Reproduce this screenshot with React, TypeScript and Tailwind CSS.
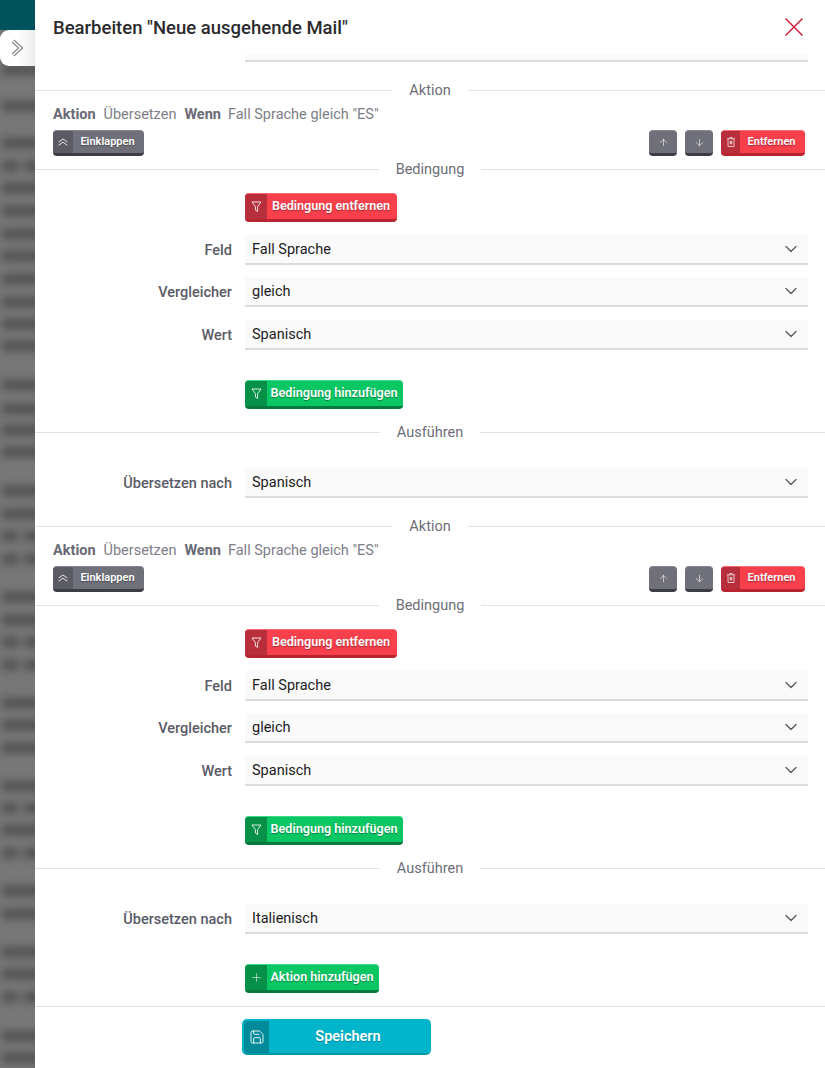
import { ChevronDown, ArrowUp, ArrowDown, Plus, Save } from 'lucide-react'
import type { ReactNode } from 'react'

const font = "font-['Roboto','Noto_Sans',sans-serif]"

// blurred lines of the page behind the drawer: [y, split row]
const backdropRows: [number, boolean][] = [
  [70, false], [106, false], [143, false], [166, true], [188, false], [211, false], [234, false],
  [256, false], [279, false], [302, false], [324, false], [346, false], [385, false],
  [409, false], [430, false], [452, false], [491, false], [514, false], [536, true],
  [559, true], [597, false], [620, false], [642, true], [665, true], [703, false],
  [725, false], [748, false], [786, false], [808, true], [830, false], [853, true],
  [891, false], [914, false], [952, false], [974, false], [997, true], [1036, false],
  [1058, false],
]

const FunnelIcon = () => (
  <svg width="11" height="12" viewBox="0 0 11 12" fill="none" stroke="currentColor" strokeWidth="1">
    <path d="M1 1h9L6.6 5.6V10.5L4.4 9V5.6Z" />
  </svg>
)

const ChevronsIcon = () => (
  <svg width="10" height="8" viewBox="0 0 10 8" fill="none" stroke="currentColor" strokeWidth="1">
    <path d="M.7 4 5 1l4.3 3M.7 7.2 5 4.2l4.3 3" />
  </svg>
)

const TrashIcon = () => (
  <svg width="8" height="10" viewBox="0 0 8 10" fill="none" stroke="currentColor" strokeWidth="1" opacity="0.8">
    <path d="M0 1.8h8M2.7 1.8V.5h2.6v1.3M1 1.8v7.7h6V1.8" />
    <path d="M2.7 4h2.6v3.3H2.7z" fill="currentColor" stroke="none" />
  </svg>
)

function Divider({ label, mt }: { label: string; mt: string }) {
  return (
    <div className={`flex h-[20px] items-center ${mt}`}>
      <div className="h-px flex-1 bg-[#e3e3e3]" />
      <span className="h-[20px] px-[17px] text-[14.5px] leading-[21px] text-[#6d6e78]">{label}</span>
      <div className="h-px flex-1 bg-[#e3e3e3]" />
    </div>
  )
}

function Select({ value, label, mt }: { value: string; label: string; mt: string }) {
  return (
    <div className={`flex items-center ${mt}`}>
      <label className="w-[197px] pt-px text-right text-[14.5px] font-medium text-[#5a5b66]">{label}</label>
      <div className="ml-[13px] flex h-[30px] w-[563px] items-center justify-between border-b-2 border-[#dcdcdc] bg-[#fafafa] pl-[7px] pr-[7px]">
        <span className="pt-px text-[14.5px] text-[#1c1c1c]">{value}</span>
        <ChevronDown size={20} strokeWidth={1.5} className="text-[#55565f]" />
      </div>
    </div>
  )
}

type Tone = 'gray' | 'red' | 'green'

const tones: Record<Tone, { body: string; tab: string }> = {
  gray: { body: 'bg-[#6f707a] border-t-[#85868f] border-b-[#3d3e45]', tab: 'bg-[#5a5b64]' },
  red: { body: 'bg-[#f8404d] border-t-[#f96a74] border-b-[#b7232e]', tab: 'bg-[#b72f3a]' },
  green: { body: 'bg-[#0ac663] border-t-[#3bd886] border-b-[#067a3d]', tab: 'bg-[#079148]' },
}

function Btn({ tone, icon, children, h, w, tabW }: { tone: Tone; icon: ReactNode; children?: ReactNode; h: string; w: string; tabW: string }) {
  const t = tones[tone]
  return (
    <button className={`flex items-stretch overflow-hidden rounded-[4px] border-t border-b-[3px] ${t.body} ${h} ${w}`}>
      <span className={`flex shrink-0 items-center justify-center text-white/85 ${tabW}`}>
        <span className={`flex h-full w-full items-center justify-center ${children ? t.tab : ''}`}>{icon}</span>
      </span>
      {children && (
        <span className="flex flex-1 items-center justify-center whitespace-nowrap pr-[2px] text-white [text-shadow:0_1px_1px_rgba(0,0,0,0.35)]">
          {children}
        </span>
      )}
    </button>
  )
}

function ActionBlock({ target }: { target: string }) {
  return (
    <>
      <div className="mx-[18px] mt-[4px] flex h-[20px] items-center gap-[8px] pt-[2px] text-[14.5px] text-[#7d7e88]">
        <b className="font-bold text-[#696a74]">Aktion</b>
        <span>Übersetzen</span>
        <b className="font-bold text-[#696a74]">Wenn</b>
        <span className="-ml-px">Fall Sprache gleich "ES"</span>
      </div>
      <div className="mx-[18px] mt-[6px] flex items-start justify-between pr-[2px]">
        <Btn tone="gray" h="h-[26px]" w="w-[91px]" tabW="w-[20px]" icon={<ChevronsIcon />}>
          <span className="text-[11px] font-semibold">Einklappen</span>
        </Btn>
        <div className="flex gap-[8px]">
          <Btn tone="gray" h="h-[26px]" w="w-[28px]" tabW="w-full" icon={<ArrowUp size={11} strokeWidth={1.5} />} />
          <Btn tone="gray" h="h-[26px]" w="w-[28px]" tabW="w-full" icon={<ArrowDown size={11} strokeWidth={1.5} />} />
          <Btn tone="red" h="h-[26px]" w="w-[84px]" tabW="w-[19px]" icon={<TrashIcon />}>
            <span className="text-[11px] font-semibold">Entfernen</span>
          </Btn>
        </div>
      </div>
      <Divider label="Bedingung" mt="mt-[3px]" />
      <div className="ml-[210px] mt-[14px] flex">
        <Btn tone="red" h="h-[29px]" w="w-[152px]" tabW="w-[22px]" icon={<FunnelIcon />}>
          <span className="text-[12.6px] font-semibold">Bedingung entfernen</span>
        </Btn>
      </div>
      <Select label="Feld" value="Fall Sprache" mt="mt-[13px]" />
      <Select label="Vergleicher" value="gleich" mt="mt-[12px]" />
      <Select label="Wert" value="Spanisch" mt="mt-[13px]" />
      <div className="ml-[210px] mt-[30px] flex">
        <Btn tone="green" h="h-[29px]" w="w-[158px]" tabW="w-[22px]" icon={<FunnelIcon />}>
          <span className="text-[12.6px] font-semibold">Bedingung hinzufügen</span>
        </Btn>
      </div>
      <Divider label="Ausführen" mt="mt-[13px]" />
      <Select label="Übersetzen nach" value={target} mt="mt-[26px]" />
    </>
  )
}

export default function App() {
  return (
    <div className={`relative flex h-[1068px] w-[825px] overflow-hidden bg-[#777777] ${font}`}>
      {/* page behind the drawer */}
      <div className="w-[35px] shrink-0 overflow-hidden">
        <div className="h-[30px] bg-[#00535a]" />
        <div className="-mx-[8px] blur-[4px]">
          {backdropRows.map(([y, split], i) => {
            const prev = i === 0 ? 30 : backdropRows[i - 1][0] + 5
            return (
              <div key={y} style={{ marginTop: y - 5 - prev }} className="flex h-[10px] gap-[6px] pl-[10px]">
                <div className={`h-full bg-[#505050] ${split ? 'w-[17px]' : 'w-[50px]'}`} />
                {split && <div className="h-full w-[20px] bg-[#505050]" />}
              </div>
            )
          })}
        </div>
      </div>

      {/* tab over the page */}
      <div className="absolute left-0 top-[30px] z-10 flex h-[36px] w-[35px] items-center rounded-l-[9px] bg-gradient-to-r from-white from-50% to-[#ececec] pl-[10px]">
        <svg width="14" height="18" viewBox="0 0 14 18" fill="none" strokeLinejoin="miter">
          <path d="M3 2l7.5 7L3 16" stroke="#8a8a90" strokeWidth="4" />
          <path d="M3 2l7.5 7L3 16" stroke="#ffffff" strokeWidth="1.4" />
        </svg>
      </div>

      {/* drawer */}
      <div className="flex w-[790px] flex-col bg-white">
        <div className="flex h-[54px] shrink-0 items-center justify-between pl-[18px] pr-[22px]">
          <h1 className="pt-[3px] text-[18.5px] font-medium text-[#2b2b2e]">Bearbeiten "Neue ausgehende Mail"</h1>
          <svg width="18" height="18" viewBox="0 0 18 18" stroke="#c9122a" strokeWidth="1.3">
            <path d="M.5.5l17 17M17.5.5l-17 17" />
          </svg>
        </div>
        <div className="ml-[210px] h-[8px] w-[563px] border-b-2 border-[#dcdcdc] bg-[#fafafa]" />
        <Divider label="Aktion" mt="mt-[18px]" />
        <ActionBlock target="Spanisch" />
        <Divider label="Aktion" mt="mt-[18px]" />
        <ActionBlock target="Italienisch" />
        <div className="ml-[210px] mt-[30px] flex">
          <Btn tone="green" h="h-[29px]" w="w-[134px]" tabW="w-[22px]" icon={<Plus size={13} strokeWidth={1.25} />}>
            <span className="text-[12.6px] font-semibold">Aktion hinzufügen</span>
          </Btn>
        </div>
        <div className="mt-[13px] h-px bg-[#e3e3e3]" />
        <div className="ml-[207px] mt-[12px] flex">
          <button className="flex h-[36px] w-[189px] items-stretch overflow-hidden rounded-[5px] border-x-2 border-t-2 border-b-2 border-x-[#00b5ca] border-t-[#00b5ca] border-b-[#0098aa] bg-[#00b5ca]">
            <span className="flex w-[25px] shrink-0 items-center justify-center bg-[#008a9a] text-white/90">
              <Save size={16} strokeWidth={1.5} />
            </span>
            <span className="flex flex-1 items-center justify-center pr-[2px] text-[14.5px] font-semibold text-white [text-shadow:0_1px_1px_rgba(0,0,0,0.25)]">Speichern</span>
          </button>
        </div>
      </div>
    </div>
  )
}
